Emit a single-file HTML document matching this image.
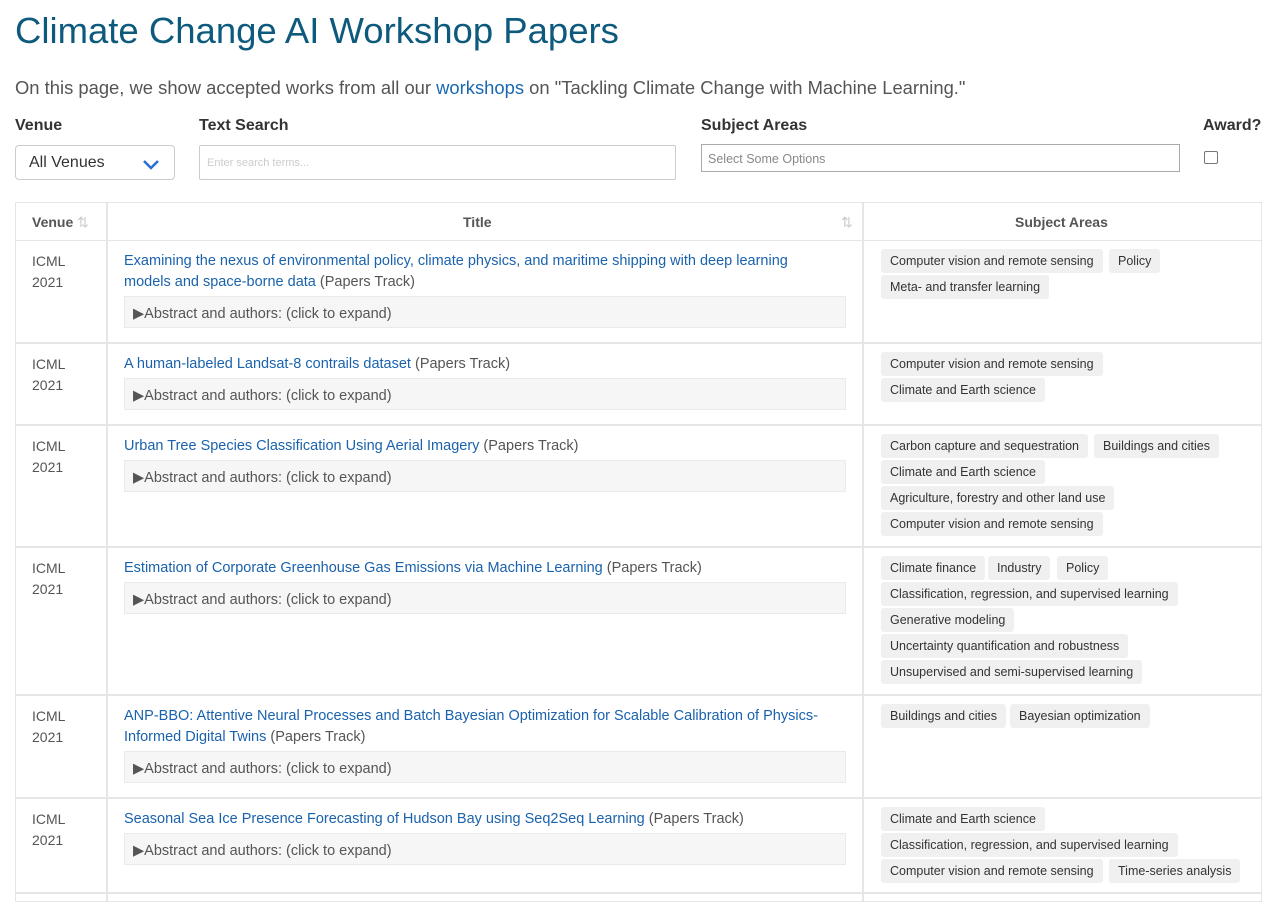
<!DOCTYPE html>
<html><head><meta charset="utf-8"><style>
*{box-sizing:border-box;margin:0;padding:0}
body{width:1281px;height:900px;overflow:hidden;background:#fff;font-family:"Liberation Sans",sans-serif;color:#444;position:relative}
.a{position:absolute}
h1{position:absolute;left:15px;top:10px;font-size:36.5px;font-weight:normal;color:#0d5a7d;letter-spacing:0px}
.intro{left:15px;top:77px;font-size:18.4px;color:#555}
.intro a{color:#1a67b0;text-decoration:none}
.lbl{font-size:16px;font-weight:bold;color:#333;top:117px}
.box{border:1px solid #ccc;background:#fff}
.tbl{left:15px;top:202px;width:1247px;height:700px;border:1px solid #e6e6e6}
.vl{position:absolute;top:202px;width:2px;height:700px;background:#e6e6e6}
.hl{position:absolute;left:15px;width:1247px;height:2px;background:#e6e6e6}
.th{font-size:14px;font-weight:bold;color:#555;top:214px}
.ven{left:32px;font-size:14px;line-height:21px;color:#555;margin-top:2px}
.ttl{left:124px;width:700px;font-size:14.5px;line-height:21px;color:#555;margin-top:2px}
.ttl span{color:#1a62ad}
.abs{left:124px;width:722px;height:32px;background:#f6f6f6;border:1px solid #eaeaea;font-size:14.5px;color:#555;padding:8px 8px 0;line-height:18px}
.tag{position:absolute;height:24px;background:#f0f0f0;border-radius:3px;font-size:12.5px;color:#333;line-height:25px;padding:0 9px;white-space:nowrap}
</style></head><body>
<h1>Climate Change AI Workshop Papers</h1>
<div class="a intro">On this page, we show accepted works from all our <a>workshops</a> on "Tackling Climate Change with Machine Learning."</div>
<div class="a lbl" style="left:15px">Venue</div>
<div class="a lbl" style="left:199px">Text Search</div>
<div class="a lbl" style="left:701px">Subject Areas</div>
<div class="a lbl" style="left:1203px">Award?</div>
<div class="a box" style="left:15px;top:145px;width:160px;height:35px;border-radius:4px;font-size:16px;color:#333;padding:8px 13px">All Venues
<svg class="a" style="left:126px;top:13px" width="18" height="11" viewBox="0 0 18 11"><path d="M2 2l7 7 7-7" fill="none" stroke="#2a6fd6" stroke-width="2.5"/></svg></div>
<div class="a box" style="left:199px;top:145px;width:477px;height:35px;border-radius:2px;font-size:11px;color:#ccc;padding:11px 7px">Enter search terms...</div>
<div class="a box" style="left:701px;top:144px;width:479px;height:28px;border-color:#aaa;font-size:12.5px;color:#888;padding:7px 6px">Select Some Options</div>
<div class="a" style="left:1204px;top:151px;width:14px;height:13px;border:1.5px solid #777;border-radius:2px"></div>

<div class="a tbl"></div>
<div class="vl" style="left:106px"></div>
<div class="vl" style="left:862px"></div>
<div class="a th" style="left:32px">Venue <span style="color:#ccc;font-weight:normal">⇅</span></div>
<div class="a th" style="left:463px">Title</div>
<div class="a th" style="left:841px;color:#ccc;font-weight:normal">⇅</div>
<div class="a th" style="left:1015px">Subject Areas</div>
<div class="hl" style="top:240px;height:1px"></div>
<div class="hl" style="top:342px"></div>
<div class="hl" style="top:424px"></div>
<div class="hl" style="top:546px"></div>
<div class="hl" style="top:694px"></div>
<div class="hl" style="top:797px"></div>
<div class="hl" style="top:892px"></div>

<!-- row1 -->
<div class="a ven" style="top:249px">ICML<br>2021</div>
<div class="a ttl" style="top:249px"><span>Examining the nexus of environmental policy, climate physics, and maritime shipping with deep learning models and space-borne data</span> (Papers Track)</div>
<div class="a abs" style="top:296px">▶Abstract and authors: (click to expand)</div>
<div class="tag" style="left:881px;top:249px">Computer vision and remote sensing</div>
<div class="tag" style="left:1109px;top:249px">Policy</div>
<div class="tag" style="left:881px;top:275px">Meta- and transfer learning</div>
<!-- row2 -->
<div class="a ven" style="top:352px">ICML<br>2021</div>
<div class="a ttl" style="top:352px"><span>A human-labeled Landsat-8 contrails dataset</span> (Papers Track)</div>
<div class="a abs" style="top:378px">▶Abstract and authors: (click to expand)</div>
<div class="tag" style="left:881px;top:352px">Computer vision and remote sensing</div>
<div class="tag" style="left:881px;top:378px">Climate and Earth science</div>
<!-- row3 -->
<div class="a ven" style="top:434px">ICML<br>2021</div>
<div class="a ttl" style="top:434px"><span>Urban Tree Species Classification Using Aerial Imagery</span> (Papers Track)</div>
<div class="a abs" style="top:460px">▶Abstract and authors: (click to expand)</div>
<div class="tag" style="left:881px;top:434px">Carbon capture and sequestration</div>
<div class="tag" style="left:1094px;top:434px">Buildings and cities</div>
<div class="tag" style="left:881px;top:460px">Climate and Earth science</div>
<div class="tag" style="left:881px;top:486px">Agriculture, forestry and other land use</div>
<div class="tag" style="left:881px;top:512px">Computer vision and remote sensing</div>
<!-- row4 -->
<div class="a ven" style="top:556px">ICML<br>2021</div>
<div class="a ttl" style="top:556px"><span>Estimation of Corporate Greenhouse Gas Emissions via Machine Learning</span> (Papers Track)</div>
<div class="a abs" style="top:582px">▶Abstract and authors: (click to expand)</div>
<div class="tag" style="left:881px;top:556px">Climate finance</div>
<div class="tag" style="left:988px;top:556px">Industry</div>
<div class="tag" style="left:1057px;top:556px">Policy</div>
<div class="tag" style="left:881px;top:582px">Classification, regression, and supervised learning</div>
<div class="tag" style="left:881px;top:608px">Generative modeling</div>
<div class="tag" style="left:881px;top:634px">Uncertainty quantification and robustness</div>
<div class="tag" style="left:881px;top:660px">Unsupervised and semi-supervised learning</div>
<!-- row5 -->
<div class="a ven" style="top:704px">ICML<br>2021</div>
<div class="a ttl" style="top:704px"><span>ANP-BBO: Attentive Neural Processes and Batch Bayesian Optimization for Scalable Calibration of Physics-Informed Digital Twins</span> (Papers Track)</div>
<div class="a abs" style="top:751px">▶Abstract and authors: (click to expand)</div>
<div class="tag" style="left:881px;top:704px">Buildings and cities</div>
<div class="tag" style="left:1010px;top:704px">Bayesian optimization</div>
<!-- row6 -->
<div class="a ven" style="top:807px">ICML<br>2021</div>
<div class="a ttl" style="top:807px"><span>Seasonal Sea Ice Presence Forecasting of Hudson Bay using Seq2Seq Learning</span> (Papers Track)</div>
<div class="a abs" style="top:833px">▶Abstract and authors: (click to expand)</div>
<div class="tag" style="left:881px;top:807px">Climate and Earth science</div>
<div class="tag" style="left:881px;top:833px">Classification, regression, and supervised learning</div>
<div class="tag" style="left:881px;top:859px">Computer vision and remote sensing</div>
<div class="tag" style="left:1109px;top:859px">Time-series analysis</div>
</body></html>
